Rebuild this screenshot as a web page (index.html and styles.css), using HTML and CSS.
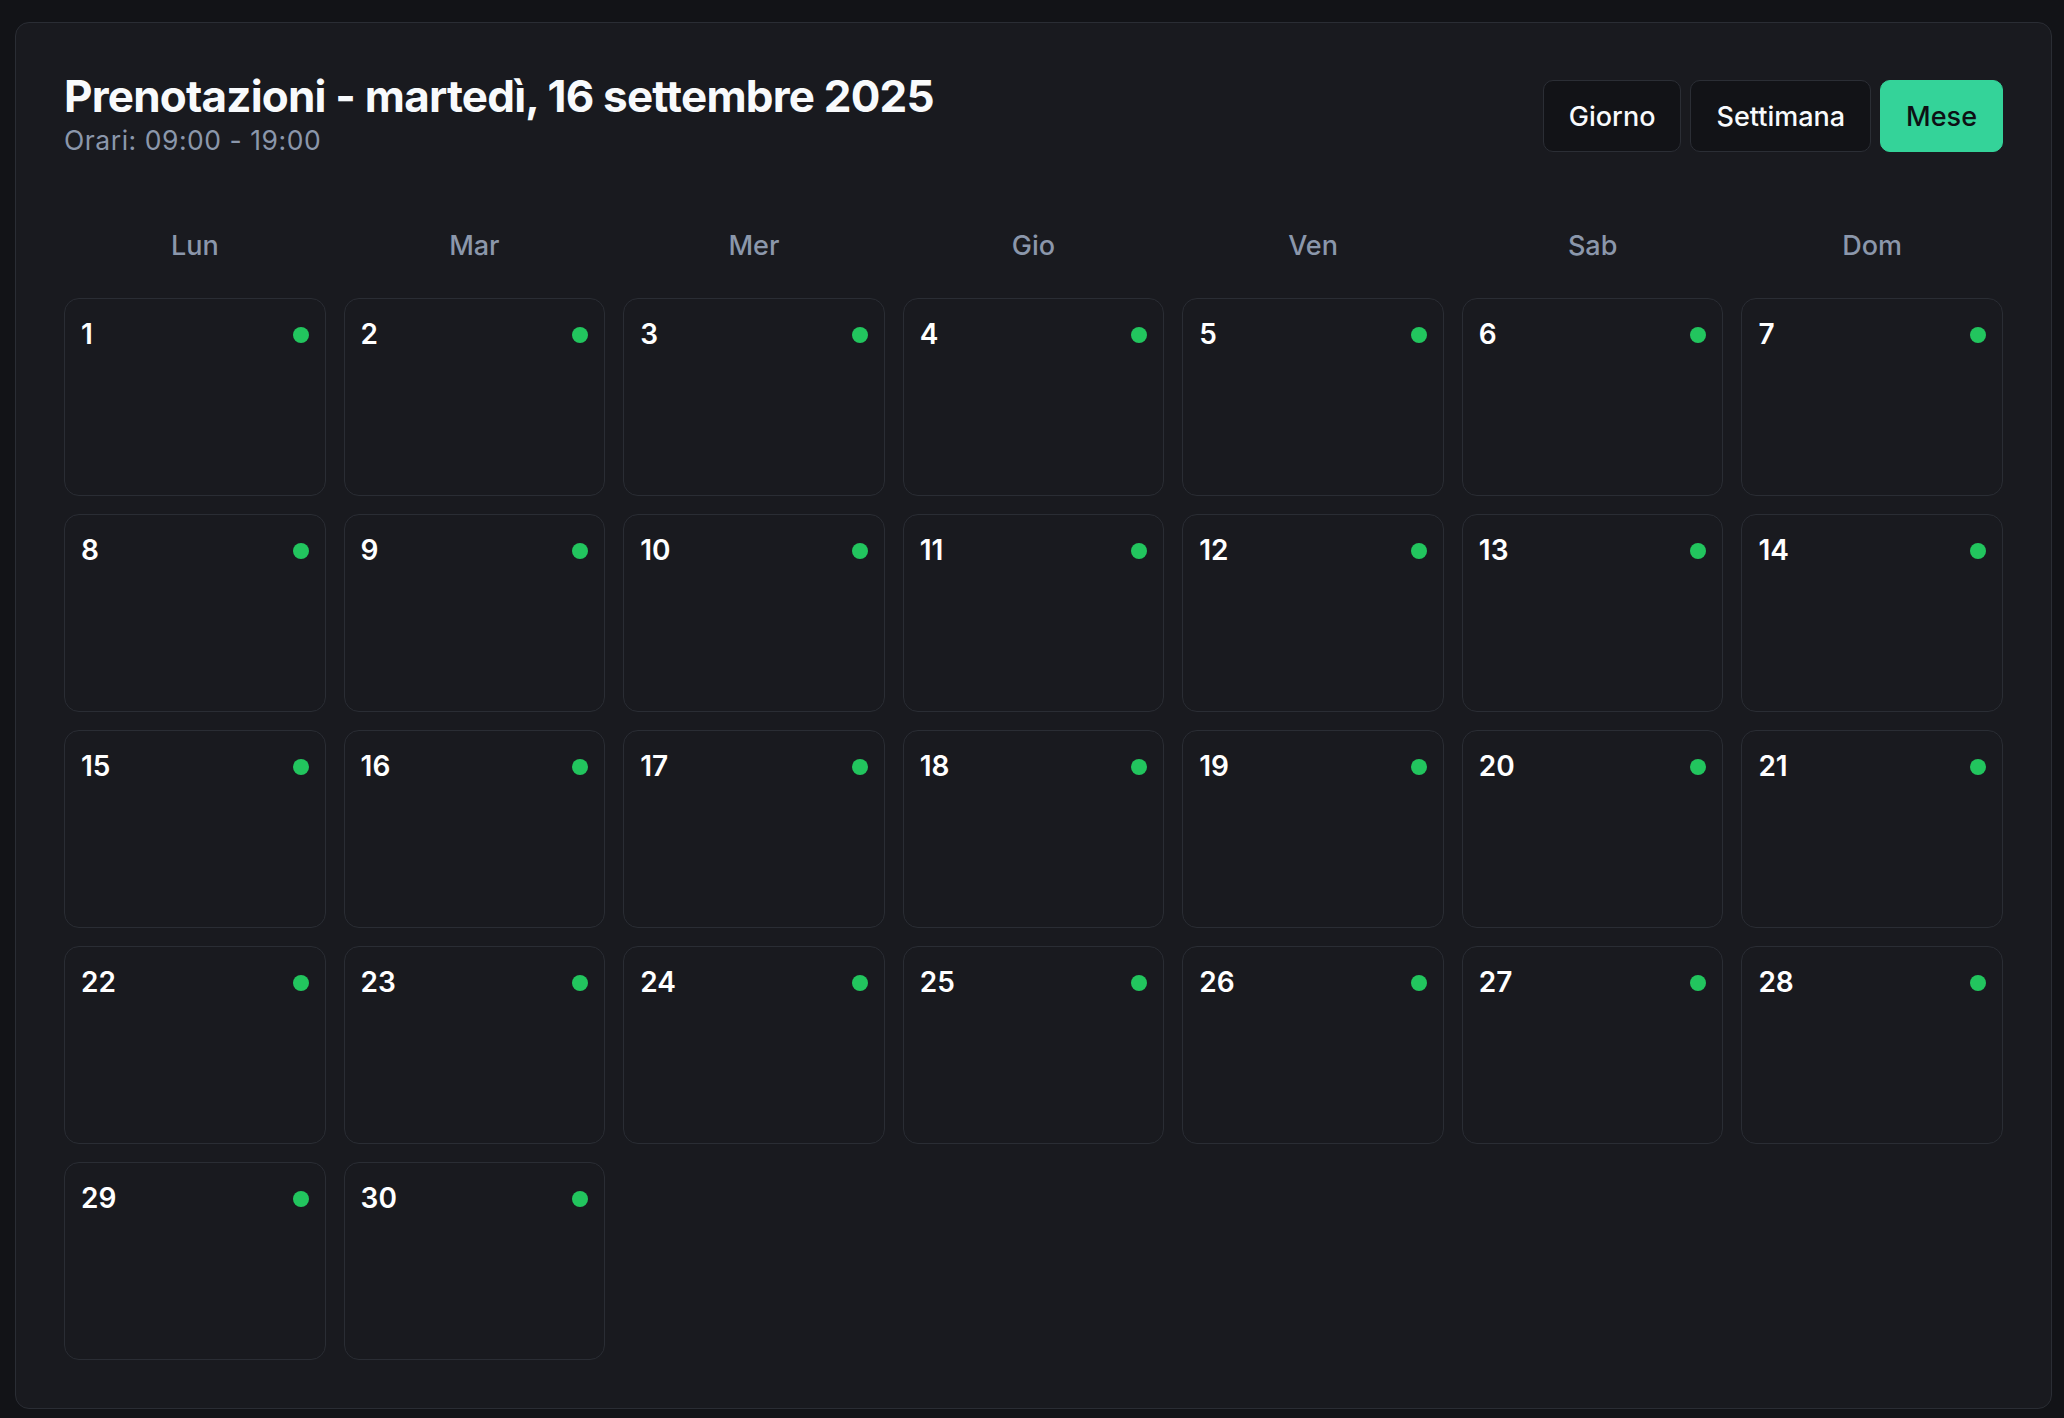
FILE: index.html
```html
<!DOCTYPE html>
<html lang="it">
<head>
<meta charset="utf-8">
<title>Prenotazioni</title>
<link rel="stylesheet" href="styles.css">
</head>
<body>
<main class="panel">
  <header class="header">
    <div class="heading">
      <h1 class="title">Prenotazioni - martedì, 16 settembre 2025</h1>
      <p class="subtitle">Orari: 09:00 - 19:00</p>
    </div>
    <nav class="views">
      <button class="view-btn">Giorno</button>
      <button class="view-btn">Settimana</button>
      <button class="view-btn active">Mese</button>
    </nav>
  </header>
  <div class="weekdays">
    <div class="weekday">Lun</div>
    <div class="weekday">Mar</div>
    <div class="weekday">Mer</div>
    <div class="weekday">Gio</div>
    <div class="weekday">Ven</div>
    <div class="weekday">Sab</div>
    <div class="weekday">Dom</div>
  </div>
  <div class="month">
    <div class="day"><span class="num">1</span><span class="dot"></span></div>
    <div class="day"><span class="num">2</span><span class="dot"></span></div>
    <div class="day"><span class="num">3</span><span class="dot"></span></div>
    <div class="day"><span class="num">4</span><span class="dot"></span></div>
    <div class="day"><span class="num">5</span><span class="dot"></span></div>
    <div class="day"><span class="num">6</span><span class="dot"></span></div>
    <div class="day"><span class="num">7</span><span class="dot"></span></div>
    <div class="day"><span class="num">8</span><span class="dot"></span></div>
    <div class="day"><span class="num">9</span><span class="dot"></span></div>
    <div class="day"><span class="num">10</span><span class="dot"></span></div>
    <div class="day"><span class="num">11</span><span class="dot"></span></div>
    <div class="day"><span class="num">12</span><span class="dot"></span></div>
    <div class="day"><span class="num">13</span><span class="dot"></span></div>
    <div class="day"><span class="num">14</span><span class="dot"></span></div>
    <div class="day"><span class="num">15</span><span class="dot"></span></div>
    <div class="day"><span class="num">16</span><span class="dot"></span></div>
    <div class="day"><span class="num">17</span><span class="dot"></span></div>
    <div class="day"><span class="num">18</span><span class="dot"></span></div>
    <div class="day"><span class="num">19</span><span class="dot"></span></div>
    <div class="day"><span class="num">20</span><span class="dot"></span></div>
    <div class="day"><span class="num">21</span><span class="dot"></span></div>
    <div class="day"><span class="num">22</span><span class="dot"></span></div>
    <div class="day"><span class="num">23</span><span class="dot"></span></div>
    <div class="day"><span class="num">24</span><span class="dot"></span></div>
    <div class="day"><span class="num">25</span><span class="dot"></span></div>
    <div class="day"><span class="num">26</span><span class="dot"></span></div>
    <div class="day"><span class="num">27</span><span class="dot"></span></div>
    <div class="day"><span class="num">28</span><span class="dot"></span></div>
    <div class="day"><span class="num">29</span><span class="dot"></span></div>
    <div class="day"><span class="num">30</span><span class="dot"></span></div>
  </div>
</main>
</body>
</html>
```

FILE: styles.css
```css
* { box-sizing: border-box; }

html, body {
  margin: 0;
  padding: 0;
  background: #121317;
  font-family: Inter, "Noto Sans", sans-serif;
  color: #f8fafc;
}

body {
  padding: 22px 12px 10px 15px;
}

.panel {
  background: #191a1f;
  border: 1px solid #2a2d34;
  border-radius: 14px;
  padding: 48px 48px 48px 48px;
}

.header {
  display: flex;
  justify-content: space-between;
  align-items: flex-start;
  margin-bottom: 55px;
}

.title {
  margin: 0;
  font-size: 44px;
  font-weight: 700;
  letter-spacing: -0.018em;
  line-height: 51px;
  color: #f8fafc;
}

.subtitle {
  margin: 2px 0 0;
  font-size: 26.5px;
  letter-spacing: 0.02em;
  line-height: 32px;
  color: #8b97ab;
}

.views {
  display: flex;
  gap: 9px;
  margin-top: 9px;
}

.view-btn {
  height: 72px;
  padding: 0 25px;
  font-family: inherit;
  font-size: 27px;
  font-weight: 500;
  color: #f8fafc;
  background: #121317;
  border: 1.5px solid #2b2e35;
  border-radius: 10px;
}

.view-btn.active {
  background: #34d399;
  border-color: #34d399;
  color: #0d1014;
}

.weekdays {
  display: grid;
  grid-template-columns: repeat(7, 1fr);
  column-gap: 18px;
  margin-bottom: 18px;
}

.weekday {
  text-align: center;
  padding: 18px 0;
  font-size: 27px;
  font-weight: 500;
  line-height: 33px;
  color: #8b97ab;
}

.month {
  display: grid;
  grid-template-columns: repeat(7, 1fr);
  grid-auto-rows: 198px;
  gap: 18px;
}

.day {
  display: flex;
  justify-content: space-between;
  align-items: flex-start;
  border: 1.5px solid #2a2d34;
  border-radius: 15px;
  padding: 19px 16px 16px 16px;
  background: #191a1f;
}

.num {
  font-size: 28px;
  font-weight: 600;
  line-height: 33px;
  color: #ffffff;
}

.dot {
  width: 16px;
  height: 16px;
  margin-top: 9px;
  border-radius: 50%;
  background: #22c55e;
}
```
